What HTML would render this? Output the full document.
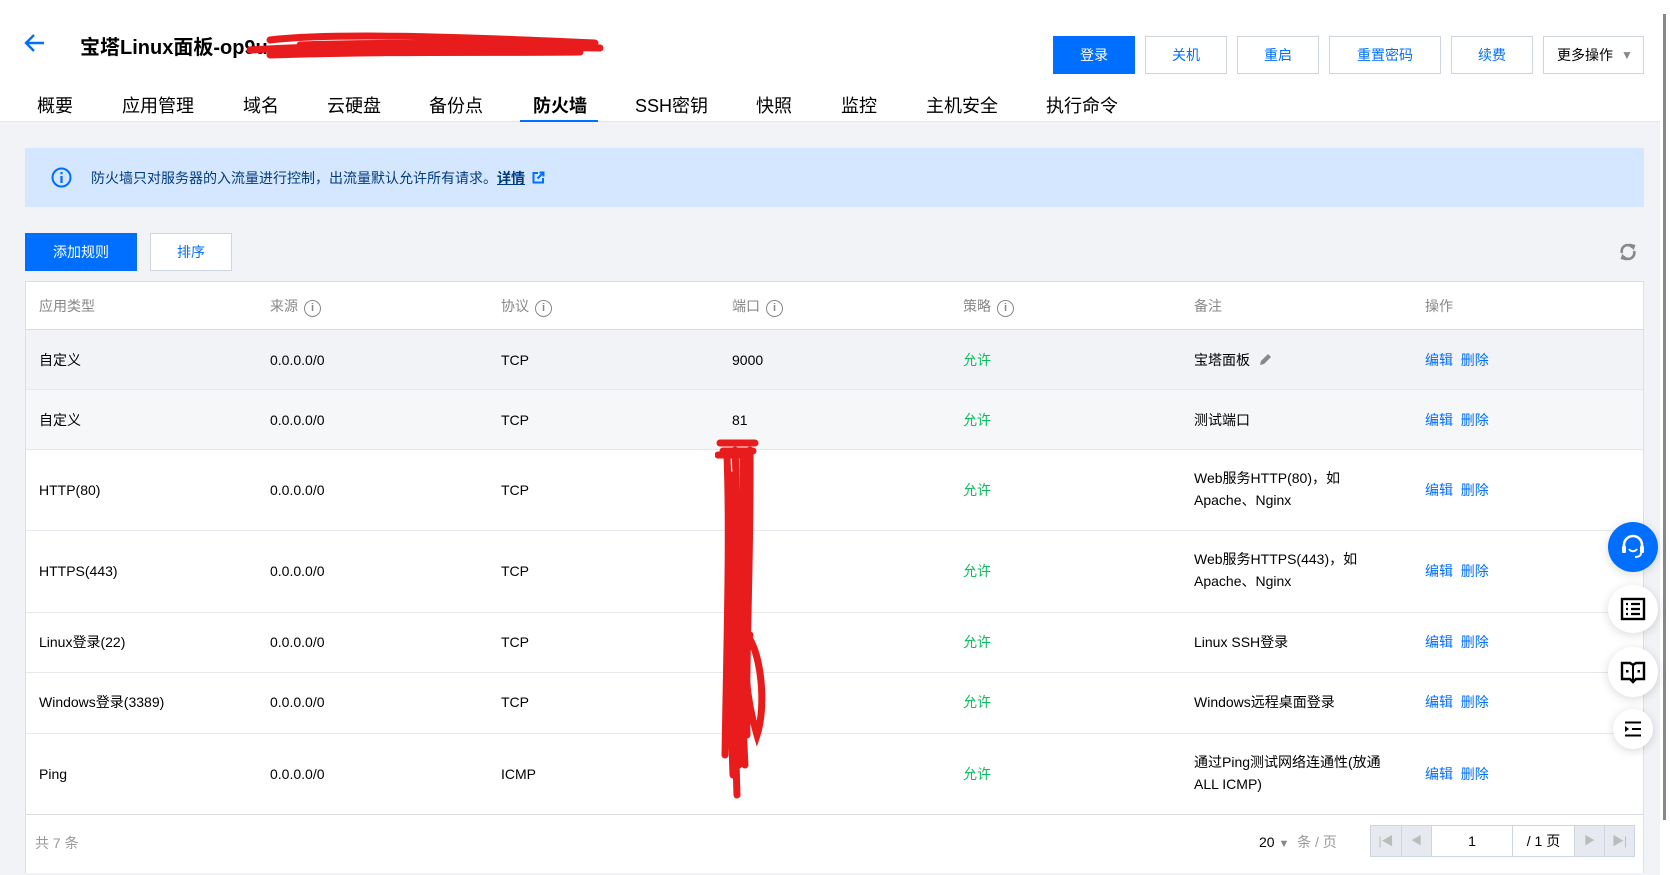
<!DOCTYPE html>
<html><head><meta charset="utf-8"><style>
*{box-sizing:border-box;margin:0;padding:0}
body{width:1670px;height:875px;overflow:hidden;background:#f2f3f7;font-family:"Liberation Sans","Noto Sans CJK SC",sans-serif;color:#000;position:relative;font-size:14px}
.abs{position:absolute}
.top{position:absolute;left:0;top:0;width:1670px;height:122px;background:#fff;border-bottom:1px solid #e3e5ea}
.btn{position:absolute;top:36px;height:38px;border:1px solid #cfd5de;background:#fff;color:#006eff;font-size:14px;display:flex;align-items:center;justify-content:center}
.tab{position:absolute;top:92px;font-size:18px;color:#000}
.banner{position:absolute;left:25px;top:148px;width:1619px;height:59px;background:#d5e7ff;font-size:14px;color:#003b80}
.tbl{position:absolute;left:25px;top:281px;width:1619px;height:592px;background:#fff;border:1px solid #dcdfe5;border-bottom:none}
.row{position:absolute;left:0;width:1617px;border-top:1px solid #e6e8ed}
.c{position:absolute;font-size:14px;color:#000;line-height:22px}
.h{color:#888;font-size:14px}
.g{color:#0abf5b}
.lk{color:#006eff}
.fb{position:absolute;border-radius:50%;background:#fff;box-shadow:0 2px 10px rgba(0,0,0,.15);display:flex;align-items:center;justify-content:center}
.ii{display:inline-block;width:17px;height:17px;border:1.5px solid #888;border-radius:50%;font-size:11px;line-height:14px;text-align:center;color:#888;vertical-align:-2px;margin-left:6px;font-weight:bold;position:relative;top:-2px}
</style></head><body>
<div class="top">
<svg class="abs" style="left:24px;top:33px" width="22" height="20" viewBox="0 0 22 20"><path d="M20 10H3M10 2L2 10l8 8" stroke="#006eff" stroke-width="2.4" fill="none"/></svg>
<div class="abs" style="left:80px;top:31px;font-size:20px;font-weight:bold">宝塔Linux面板-op9u</div>
<svg class="abs" style="left:240px;top:28px" width="370" height="40"><path d="M30 12 C90 5 200 8 355 15 M10 22 C120 15 250 18 360 20 M30 27 C150 23 260 25 340 24 M60 17 C150 14 250 16 330 18" stroke="#e81c1c" stroke-width="7" fill="none" stroke-linecap="round"/></svg>
<div class="btn" style="left:1053px;width:82px;background:#006eff;border-color:#006eff;color:#fff">登录</div>
<div class="btn" style="left:1145px;width:82px">关机</div>
<div class="btn" style="left:1237px;width:82px">重启</div>
<div class="btn" style="left:1329px;width:112px">重置密码</div>
<div class="btn" style="left:1451px;width:82px">续费</div>
<div class="btn" style="left:1543px;width:101px;color:#000;justify-content:flex-start;padding-left:13px">更多操作<span style="color:#888;font-size:12px;margin-left:8px">▼</span></div>
<div class="tab" style="left:37px">概要</div>
<div class="tab" style="left:122px">应用管理</div>
<div class="tab" style="left:243px">域名</div>
<div class="tab" style="left:327px">云硬盘</div>
<div class="tab" style="left:429px">备份点</div>
<div class="tab" style="left:533px;font-weight:bold">防火墙</div>
<div class="abs" style="left:520px;top:120px;width:78px;height:2px;background:#006eff"></div>
<div class="tab" style="left:635px">SSH密钥</div>
<div class="tab" style="left:756px">快照</div>
<div class="tab" style="left:841px">监控</div>
<div class="tab" style="left:926px">主机安全</div>
<div class="tab" style="left:1046px">执行命令</div>
</div>
<div class="banner">
<svg class="abs" style="left:26px;top:19px" width="21" height="21"><circle cx="10.5" cy="10.5" r="9" stroke="#006eff" stroke-width="2" fill="none"/><rect x="9.4" y="9" width="2.2" height="7" fill="#006eff"/><rect x="9.4" y="5" width="2.2" height="2.2" fill="#006eff"/></svg>
<div class="abs" style="left:66px;top:20px">防火墙只对服务器的入流量进行控制，出流量默认允许所有请求。<b style="color:#003b80;text-decoration:underline">详情</b> <svg width="13" height="13" style="vertical-align:-1px;margin-left:3px"><path d="M6 2H1.5v9.5H11V7M7.5 1.5h4v4M11.5 1.5 5.5 7.5" stroke="#006eff" stroke-width="2" fill="none"/></svg></div>
</div>
<div class="abs" style="left:25px;top:233px;width:112px;height:38px;background:#006eff;color:#fff;display:flex;align-items:center;justify-content:center">添加规则</div>
<div class="abs" style="left:150px;top:233px;width:82px;height:38px;background:#fff;border:1px solid #cfd5de;color:#006eff;display:flex;align-items:center;justify-content:center">排序</div>
<svg class="abs" style="left:1618px;top:242px" width="20" height="20" viewBox="0 0 20 20"><path d="M4 11A6 6 0 0 1 14.5 5.5M16 9A6 6 0 0 1 5.5 14.5" stroke="#888" stroke-width="2.6" fill="none"/><path d="M11.5 1.5l6 1.5-2 5.5zM8.5 18.5l-6-1.5 2-5.5z" fill="#888"/></svg>
<div class="tbl">
<div class="c h" style="left:13px;top:13px">应用类型</div>
<div class="c h" style="left:244px;top:13px">来源<span class="ii">i</span></div>
<div class="c h" style="left:475px;top:13px">协议<span class="ii">i</span></div>
<div class="c h" style="left:706px;top:13px">端口<span class="ii">i</span></div>
<div class="c h" style="left:937px;top:13px">策略<span class="ii">i</span></div>
<div class="c h" style="left:1168px;top:13px">备注</div>
<div class="c h" style="left:1399px;top:13px">操作</div>

<div class="row" style="top:47px;height:60px;background:#f2f3f7;border-top-color:#d8dbe2">
<div class="c" style="left:13px;top:19px">自定义</div><div class="c" style="left:244px;top:19px">0.0.0.0/0</div><div class="c" style="left:475px;top:19px">TCP</div><div class="c" style="left:706px;top:19px">9000</div><div class="c g" style="left:937px;top:19px">允许</div><div class="c" style="left:1168px;top:19px">宝塔面板 <svg width="14" height="14" style="vertical-align:-2px;margin-left:4px"><path d="M2 12l1-4 7-7 3 3-7 7z" fill="#888"/></svg></div><div class="c lk" style="left:1399px;top:19px">编辑&nbsp; 删除</div></div>
<div class="row" style="top:107px;height:60px;background:#f6f7f9">
<div class="c" style="left:13px;top:19px">自定义</div><div class="c" style="left:244px;top:19px">0.0.0.0/0</div><div class="c" style="left:475px;top:19px">TCP</div><div class="c" style="left:706px;top:19px">81</div><div class="c g" style="left:937px;top:19px">允许</div><div class="c" style="left:1168px;top:19px">测试端口</div><div class="c lk" style="left:1399px;top:19px">编辑&nbsp; 删除</div></div>
<div class="row" style="top:167px;height:81px">
<div class="c" style="left:13px;top:29px">HTTP(80)</div><div class="c" style="left:244px;top:29px">0.0.0.0/0</div><div class="c" style="left:475px;top:29px">TCP</div><div class="c g" style="left:937px;top:29px">允许</div><div class="c" style="left:1168px;top:17px">Web服务HTTP(80)，如<br>Apache、Nginx</div><div class="c lk" style="left:1399px;top:29px">编辑&nbsp; 删除</div></div>
<div class="row" style="top:248px;height:82px">
<div class="c" style="left:13px;top:29px">HTTPS(443)</div><div class="c" style="left:244px;top:29px">0.0.0.0/0</div><div class="c" style="left:475px;top:29px">TCP</div><div class="c g" style="left:937px;top:29px">允许</div><div class="c" style="left:1168px;top:17px">Web服务HTTPS(443)，如<br>Apache、Nginx</div><div class="c lk" style="left:1399px;top:29px">编辑&nbsp; 删除</div></div>
<div class="row" style="top:330px;height:60px">
<div class="c" style="left:13px;top:18px">Linux登录(22)</div><div class="c" style="left:244px;top:18px">0.0.0.0/0</div><div class="c" style="left:475px;top:18px">TCP</div><div class="c g" style="left:937px;top:18px">允许</div><div class="c" style="left:1168px;top:18px">Linux SSH登录</div><div class="c lk" style="left:1399px;top:18px">编辑&nbsp; 删除</div></div>
<div class="row" style="top:390px;height:61px">
<div class="c" style="left:13px;top:18px">Windows登录(3389)</div><div class="c" style="left:244px;top:18px">0.0.0.0/0</div><div class="c" style="left:475px;top:18px">TCP</div><div class="c g" style="left:937px;top:18px">允许</div><div class="c" style="left:1168px;top:18px">Windows远程桌面登录</div><div class="c lk" style="left:1399px;top:18px">编辑&nbsp; 删除</div></div>
<div class="row" style="top:451px;height:81px">
<div class="c" style="left:13px;top:29px">Ping</div><div class="c" style="left:244px;top:29px">0.0.0.0/0</div><div class="c" style="left:475px;top:29px">ICMP</div><div class="c g" style="left:937px;top:29px">允许</div><div class="c" style="left:1168px;top:17px">通过Ping测试网络连通性(放通<br>ALL ICMP)</div><div class="c lk" style="left:1399px;top:29px">编辑&nbsp; 删除</div></div>
<div class="row" style="top:532px;height:60px;border-top-color:#d8dbe2">
<div class="c" style="left:9px;top:17px;color:#999">共 7 条</div>
<div class="c" style="left:1233px;top:16px">20 <span style="color:#888;font-size:11px">▼</span> <span style="color:#999">&nbsp;条 / 页</span></div>
<div class="abs" style="left:1344px;top:10px;width:265px;height:32px;border:1px solid #cfd5de;background:#e6e9ef;display:flex">
<div style="width:31px;border-right:1px solid #cfd5de;color:#bbb;text-align:center;line-height:30px;font-size:12px">|◀</div>
<div style="width:30px;border-right:1px solid #cfd5de;color:#bbb;text-align:center;line-height:30px;font-size:11px">◀</div>
<div style="width:81px;background:#fff;border-right:1px solid #cfd5de;text-align:center;line-height:30px">1</div>
<div style="width:62px;background:#fff;border-right:1px solid #cfd5de;text-align:center;line-height:30px">/ 1 页</div>
<div style="width:30px;border-right:1px solid #cfd5de;color:#bbb;text-align:center;line-height:30px;font-size:11px">▶</div>
<div style="width:29px;color:#bbb;text-align:center;line-height:30px;font-size:12px">▶|</div>
</div></div>
</div>
<svg class="abs" style="left:715px;top:435px" width="65" height="375"><path d="M5 8 H40 M8 16 H38 M3 20 H28 M12 20 C15 100 12 200 10 320 M20 15 C25 120 18 250 22 360 M28 20 C30 130 25 250 30 330 M35 15 C36 120 30 240 32 300 M16 40 C20 120 14 240 18 340 M18 200 C40 180 55 260 42 300 C30 260 28 220 35 200 M14 150 C20 240 16 300 24 330 M24 60 C26 150 22 260 26 320" stroke="#e81c1c" stroke-width="7" fill="none" stroke-linecap="round"/></svg>
<div class="abs" style="left:1660px;top:0;width:10px;height:875px;background:#fff"></div>
<div class="abs" style="left:1663px;top:14px;width:3px;height:806px;background:#888"></div>
<div class="fb" style="left:1608px;top:522px;width:50px;height:50px;background:#006eff"><svg width="26" height="26" viewBox="0 0 26 26"><path d="M4 15V11a9 9 0 0 1 18 0v4" stroke="#fff" stroke-width="2.6" fill="none"/><rect x="2" y="12" width="4" height="7" rx="1" fill="#fff"/><rect x="20" y="12" width="4" height="7" rx="1" fill="#fff"/><path d="M9 15c2 3 6 3 8 0M21 19c0 3-3 4-6 4" stroke="#fff" stroke-width="2" fill="none"/></svg></div>
<div class="fb" style="left:1608px;top:585px;width:50px;height:48px"><svg width="26" height="24" viewBox="0 0 26 24"><rect x="2" y="2" width="22" height="20" stroke="#000" stroke-width="2.4" fill="none"/><path d="M6 7h2M11 7h9M6 12h2M11 12h9M6 17h2M11 17h9" stroke="#000" stroke-width="2.2"/></svg></div>
<div class="fb" style="left:1608px;top:647px;width:50px;height:50px"><svg width="26" height="24" viewBox="0 0 26 24"><path d="M2 3h8l3 2 3-2h8v16h-8l-3 3-3-3H2z" stroke="#000" stroke-width="2.4" fill="none"/><path d="M13 5v15" stroke="#000" stroke-width="2"/><rect x="6" y="10" width="2.5" height="2.5"/><rect x="17.5" y="10" width="2.5" height="2.5"/></svg></div>
<div class="fb" style="left:1613px;top:709px;width:40px;height:40px"><svg width="18" height="16" viewBox="0 0 18 16"><path d="M1 1.5h16M8 8h9M1 14.5h16" stroke="#000" stroke-width="2"/><path d="M1 5l4 3-4 3z"/></svg></div>
</body></html>
